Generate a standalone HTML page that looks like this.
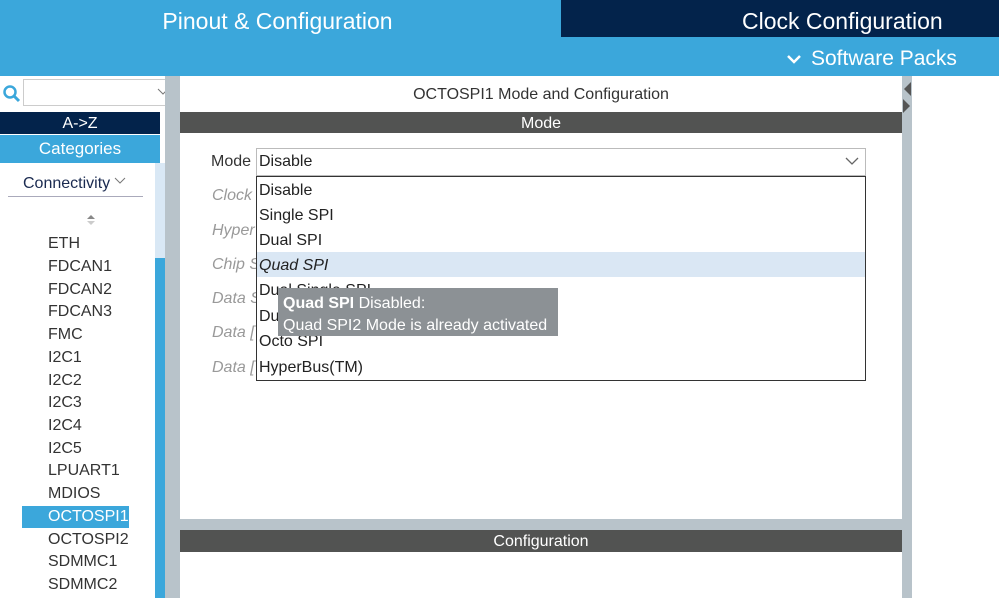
<!DOCTYPE html><html><head><style>
body{margin:0;width:999px;height:598px;overflow:hidden;background:#fff;font-family:"Liberation Sans",sans-serif;position:relative}
div{position:absolute;box-sizing:border-box}
.t{white-space:nowrap}
.li{left:48px;font-size:16px;color:#333}
.lab{left:212px;font-size:16px;color:#999;font-style:italic}
.it{left:259px;font-size:16px;color:#222}
</style></head><body>
<div style="left:0;top:0;width:999px;height:76px;background:#3ba7db"></div>
<div class="t" style="left:0;width:555px;top:8px;text-align:center;color:#fff;font-size:23px">Pinout &amp; Configuration</div>
<div style="left:561px;top:0;width:438px;height:37px;background:#03234b"></div>
<div class="t" style="left:742px;top:8px;color:#fff;font-size:23px">Clock Configuration</div>
<svg style="position:absolute;left:786px;top:53px" width="16" height="12"><path d="M2 3l6 6 6-6" stroke="#fff" stroke-width="2.5" fill="none"/></svg>
<div class="t" style="left:811px;top:47px;color:#fff;font-size:21px">Software Packs</div>
<!-- left -->
<svg style="position:absolute;left:2px;top:84px" width="20" height="20"><circle cx="8" cy="8" r="5.5" stroke="#3ba7db" stroke-width="2.5" fill="none"/><path d="M12 12l5 5" stroke="#3ba7db" stroke-width="3"/></svg>
<div style="left:23px;top:79px;width:148px;height:27px;border:1px solid #ccc"></div>
<svg style="position:absolute;left:157px;top:88px" width="12" height="8"><path d="M1 1l5 5 5-5" stroke="#777" fill="none"/></svg>
<div style="left:0;top:112px;width:160px;height:22px;background:#03234b;color:#fff;font-size:16px;text-align:center;line-height:23px">A-&gt;Z</div>
<div style="left:0;top:135px;width:160px;height:28px;background:#3ba7db;color:#fff;font-size:17px;text-align:center;line-height:28px">Categories</div>
<div class="t" style="left:23px;top:175px;font-size:16px;color:#1a2a50">Connectivity</div>
<svg style="position:absolute;left:114px;top:177px" width="12" height="8"><path d="M1 1l5 5 5-5" stroke="#777" fill="none"/></svg>
<div style="left:8px;top:196px;width:135px;height:1px;background:#aab"></div>
<svg style="position:absolute;left:85px;top:213px" width="12" height="14"><path d="M2 6l4-4 4 4z" fill="#888"/><path d="M2 8l4 4 4-4z" fill="#ccc"/></svg>
<div style="left:155px;top:163px;width:10px;height:435px;background:#d9e8f5"></div>
<div style="left:155px;top:258px;width:10px;height:340px;background:#3ba7db"></div>
<div style="left:165px;top:76px;width:15px;height:522px;background:#b8c3ca"></div>
<div style="left:22px;top:506px;width:107px;height:22px;background:#3ba7db"></div>
<div class="t li" style="top:235px">ETH</div>
<div class="t li" style="top:258px">FDCAN1</div>
<div class="t li" style="top:281px">FDCAN2</div>
<div class="t li" style="top:303px">FDCAN3</div>
<div class="t li" style="top:326px">FMC</div>
<div class="t li" style="top:349px">I2C1</div>
<div class="t li" style="top:372px">I2C2</div>
<div class="t li" style="top:394px">I2C3</div>
<div class="t li" style="top:417px">I2C4</div>
<div class="t li" style="top:440px">I2C5</div>
<div class="t li" style="top:462px">LPUART1</div>
<div class="t li" style="top:485px">MDIOS</div>
<div style="left:48px;top:508px;width:81px;overflow:hidden;font-size:16px;color:#fff;white-space:nowrap">OCTOSPI1</div>
<div style="left:48px;top:531px;width:81px;overflow:hidden;font-size:16px;color:#333;white-space:nowrap">OCTOSPI2</div>
<div class="t li" style="top:553px">SDMMC1</div>
<div class="t li" style="top:576px">SDMMC2</div>
<!-- main -->
<div class="t" style="left:180px;width:722px;top:86px;text-align:center;font-size:16px;color:#333">OCTOSPI1 Mode and Configuration</div>
<div style="left:180px;top:112px;width:722px;height:21px;background:#525352;color:#fff;text-align:center;font-size:16px;line-height:23px">Mode</div>
<div style="left:902px;top:76px;width:10px;height:522px;background:#b8c3ca"></div>
<svg style="position:absolute;left:902px;top:80px" width="10" height="34"><path d="M9 2L2 9l7 7z" fill="#555"/><path d="M1 19l7 7-7 7z" fill="#555"/></svg>
<div style="left:180px;top:519px;width:722px;height:11px;background:#b8c3ca"></div>
<div style="left:180px;top:530px;width:722px;height:22px;background:#525352;color:#fff;text-align:center;font-size:16px;line-height:23px">Configuration</div>
<div class="t" style="left:211px;top:153px;font-size:16px;color:#333">Mode</div>
<div style="left:256px;top:148px;width:610px;height:28px;border:1px solid #bbb"></div>
<div class="t" style="left:259px;top:153px;font-size:16px;color:#222">Disable</div>
<svg style="position:absolute;left:845px;top:157px" width="14" height="9"><path d="M1 1l6 6 6-6" stroke="#666" fill="none" stroke-width="1.3"/></svg>
<div class="t lab" style="top:187px">Clock</div>
<div class="t lab" style="top:222px">Hyper</div>
<div class="t lab" style="top:256px">Chip S</div>
<div class="t lab" style="top:290px">Data S</div>
<div class="t lab" style="top:324px">Data [</div>
<div class="t lab" style="top:359px">Data [</div>
<div style="left:256px;top:176px;width:610px;height:205px;border:1px solid #333;background:#fff"></div>
<div style="left:257px;top:252px;width:608px;height:25px;background:#dae7f4"></div>
<div class="t it" style="top:182px">Disable</div>
<div class="t it" style="top:207px">Single SPI</div>
<div class="t it" style="top:232px">Dual SPI</div>
<div class="t it" style="top:257px;font-style:italic">Quad SPI</div>
<div class="t it" style="top:282px">Dual Single SPI</div>
<div class="t it" style="top:308px">Dual Quad SPI</div>
<div class="t it" style="top:333px">Octo SPI</div>
<div class="t it" style="top:359px">HyperBus(TM)</div>
<div style="left:278px;top:288px;width:280px;height:48px;background:#8c9195;color:#fff;font-size:16px;padding:5px 0 0 5px;line-height:22px;white-space:nowrap"><b>Quad SPI</b> Disabled:<br>Quad SPI2 Mode is already activated</div>
</body></html>
